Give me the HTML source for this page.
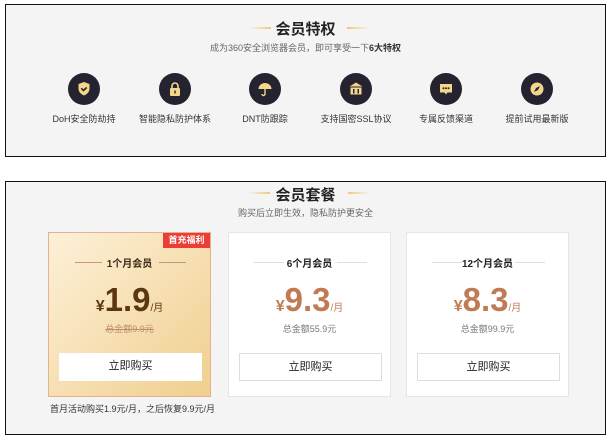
<!DOCTYPE html>
<html><head><meta charset="utf-8"><style>
*{margin:0;padding:0;box-sizing:border-box}
body{width:611px;height:442px;background:#fff;font-family:"Liberation Sans","Noto Sans CJK SC",sans-serif;position:relative;overflow:hidden;color:#333}
.box{position:absolute;left:5px;width:601px;background:#f4f4f4;border:1.5px solid #111}
.abs{position:absolute}
.title{position:absolute;left:0;width:100%;text-align:center;font-size:15px;font-weight:bold;color:#222}
.sub{position:absolute;left:0;width:100%;text-align:center;font-size:9px;color:#666}
.gl{position:absolute;height:2px;width:22px}
.ic{position:absolute;width:32px;height:32px;border-radius:50%;background:#24232f}
.ic svg{position:absolute;left:8px;top:8px}
.lab{position:absolute;width:100px;text-align:center;font-size:9px;color:#333}
.card{position:absolute;top:232px;width:163px;height:165px;background:#fff;border:1px solid #e6e6e6}
.ct{position:absolute;top:22px;left:0;width:100%;text-align:center;font-size:10px;font-weight:bold;color:#222}
.ln{position:absolute;top:29px;height:1px;width:56px;background:#ddd}
.pr{position:absolute;top:48px;left:0;width:100%;text-align:center;color:#c07b55;font-weight:bold;white-space:nowrap}
.pr .y{font-size:16px}.pr .n{font-size:33px;letter-spacing:0}.pr .m{font-size:10px;font-weight:normal}
.tot{position:absolute;top:89px;left:0;width:100%;text-align:center;font-size:9px;color:#777}
.btn{position:absolute;left:10px;top:120px;width:143px;height:28px;background:#fff;border:1px solid #ddd;text-align:center;line-height:26px;font-size:11px;color:#222}
</style></head><body>
<div class="box" style="top:4px;height:153px">
  <div class="gl" style="left:243px;top:22px;background:linear-gradient(90deg,rgba(240,200,120,0),#f0c878)"></div>
  <div class="gl" style="left:341px;top:22px;background:linear-gradient(90deg,#f0c878,rgba(240,200,120,0))"></div>
  <div class="title" style="top:13px">会员特权</div>
  <div class="sub" style="top:36px">成为360安全浏览器会员，即可享受一下<b style="color:#333">6大特权</b></div>
  <div class="ic" style="left:62px;top:68px"><svg width="16" height="16" viewBox="0 0 16 16"><path d="M8 1L2.5 3v4.5c0 3.5 2.5 5.8 5.5 7 3-1.2 5.5-3.5 5.5-7V3z" fill="#f5d78b"/><path d="M5.3 7.3l2.2 2.2 3.2-3" stroke="#24232f" stroke-width="1.6" fill="none"/></svg></div>
  <div class="ic" style="left:153px;top:68px"><svg width="16" height="16" viewBox="0 0 16 16"><path d="M5 7V5a3 3 0 016 0v2" stroke="#f5d78b" stroke-width="1.6" fill="none"/><rect x="3" y="7" width="10" height="8" rx="1" fill="#f5d78b"/><rect x="7.3" y="9.5" width="1.4" height="3" fill="#24232f"/></svg></div>
  <div class="ic" style="left:243px;top:68px"><svg width="16" height="16" viewBox="0 0 16 16"><path d="M1.5 8a6.5 6 0 0113 0z" fill="#f5d78b"/><path d="M8 8v5a1.5 1.5 0 01-3 0" stroke="#f5d78b" stroke-width="1.4" fill="none"/></svg></div>
  <div class="ic" style="left:334px;top:68px"><svg width="16" height="16" viewBox="0 0 16 16"><path d="M8 1.5L1.5 5.5h13z" fill="#f5d78b"/><rect x="2.5" y="6.5" width="11" height="7" fill="#f5d78b"/><rect x="5" y="8" width="1.5" height="4.5" fill="#24232f"/><rect x="9.5" y="8" width="1.5" height="4.5" fill="#24232f"/></svg></div>
  <div class="ic" style="left:424px;top:68px"><svg width="16" height="16" viewBox="0 0 16 16"><path d="M2 3h12v8.5H9.5L8 13.5 6.5 11.5H2z" fill="#f5d78b"/><circle cx="5.5" cy="7.3" r="1" fill="#24232f"/><circle cx="8" cy="7.3" r="1" fill="#24232f"/><circle cx="10.5" cy="7.3" r="1" fill="#24232f"/></svg></div>
  <div class="ic" style="left:515px;top:68px"><svg width="16" height="16" viewBox="0 0 16 16"><circle cx="8" cy="8" r="6.5" fill="#f5d78b"/><path d="M11 5L9 9 5 11 7 7z" fill="#24232f"/></svg></div>
  <div class="lab" style="left:28px;top:107px">DoH安全防劫持</div>
  <div class="lab" style="left:119px;top:107px">智能隐私防护体系</div>
  <div class="lab" style="left:209px;top:107px">DNT防跟踪</div>
  <div class="lab" style="left:300px;top:107px">支持国密SSL协议</div>
  <div class="lab" style="left:390px;top:107px">专属反馈渠道</div>
  <div class="lab" style="left:481px;top:107px">提前试用最新版</div>
</div>
<div class="box" style="top:181px;height:254px;border-width:1.5px">
  <div class="gl" style="left:242px;top:10px;background:linear-gradient(90deg,rgba(240,200,120,0),#f0c878)"></div>
  <div class="gl" style="left:342px;top:10px;background:linear-gradient(90deg,#f0c878,rgba(240,200,120,0))"></div>
  <div class="title" style="top:2px">会员套餐</div>
  <div class="sub" style="top:24px">购买后立即生效，隐私防护更安全</div>
</div>
<div class="card" style="left:48px;background:linear-gradient(135deg,#fdf0d9,#f0cf8e);border-color:#e3b28f">
  <div class="abs" style="right:0;top:0;width:47px;height:15px;background:#ea3e36;color:#fff;font-size:9px;font-weight:bold;text-align:center;line-height:15px">首充福利</div>
  <div class="ln" style="left:26px;background:#c59a6e;width:27px"></div>
  <div class="ln" style="left:110px;background:#c59a6e;width:27px"></div>
  <div class="ct" style="color:#3a2a17">1个月会员</div>
  <div class="pr" style="color:#5a3710"><span class="y">¥</span><span class="n">1.9</span><span class="m">/月</span></div>
  <div class="tot" style="color:#c08b6c;text-decoration:line-through">总金额9.9元</div>
  <div class="btn" style="border:none">立即购买</div>
</div>
<div class="card" style="left:228px">
  <div class="ln" style="left:25px;width:30px"></div><div class="ln" style="left:108px;width:30px"></div>
  <div class="ct">6个月会员</div>
  <div class="pr"><span class="y">¥</span><span class="n">9.3</span><span class="m">/月</span></div>
  <div class="tot">总金额55.9元</div>
  <div class="btn">立即购买</div>
</div>
<div class="card" style="left:406px">
  <div class="ln" style="left:25px;width:30px"></div><div class="ln" style="left:108px;width:30px"></div>
  <div class="ct">12个月会员</div>
  <div class="pr"><span class="y">¥</span><span class="n">8.3</span><span class="m">/月</span></div>
  <div class="tot">总金额99.9元</div>
  <div class="btn">立即购买</div>
</div>
<div class="abs" style="left:50px;top:402px;font-size:9px;color:#333">首月活动购买1.9元/月，之后恢复9.9元/月</div>
</body></html>
